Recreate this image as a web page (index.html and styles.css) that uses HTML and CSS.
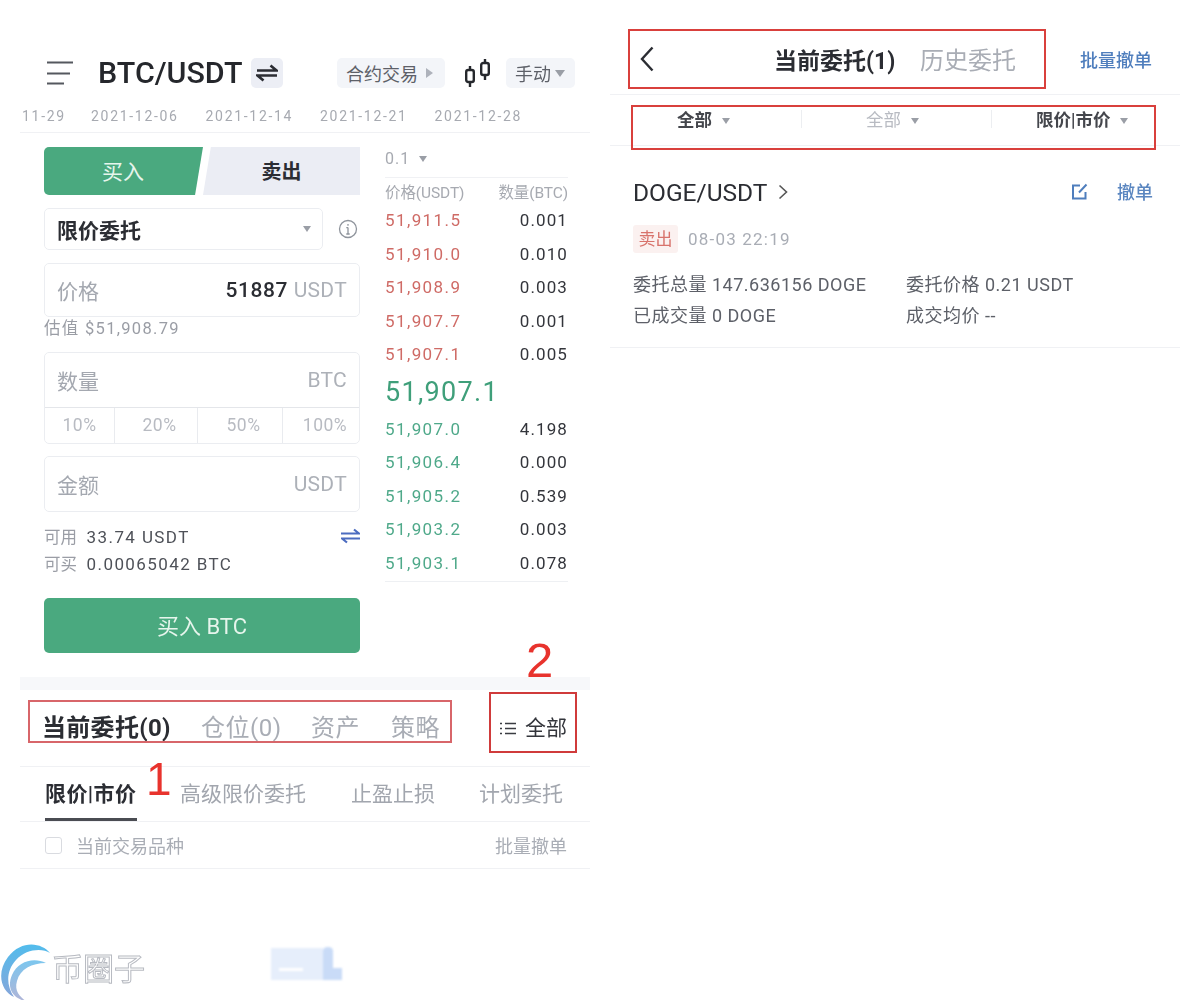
FILE: index.html
```html
<!DOCTYPE html>
<html lang="zh">
<head>
<meta charset="utf-8">
<title>BTC/USDT</title>
<link rel="stylesheet" href="styles.css">
</head>
<body>
<main class="page">
  <section class="phone phone-left">
    <header class="topbar">
      <svg class="menu-icon" width="26" height="24" viewBox="0 0 26 24"><path d="M0 1.5H26M0 12.5H23M0 22.5H17" stroke="#55585f" stroke-width="2.2" fill="none"/></svg>
      <h1 class="pair">BTC/USDT</h1>
      <span class="swap-btn"><svg width="22" height="18" viewBox="0 0 22 18"><path d="M1 6.5H20.5L14.5 1.5M21 11.5H1.5L7.5 16.5" stroke="#2b2d33" stroke-width="2.7" fill="none"/></svg></span>
      <span class="pill pill-contract">合约交易<i class="tri-right"></i></span>
      <svg class="candle-icon" width="28" height="30" viewBox="0 0 28 30"><path d="M6 8V29M21 1V22" stroke="#26282d" stroke-width="2.4"/><rect x="2.2" y="12" width="7.6" height="12" rx="2" fill="#fff" stroke="#26282d" stroke-width="2.4"/><rect x="17.2" y="5" width="7.6" height="12" rx="2" fill="#fff" stroke="#26282d" stroke-width="2.4"/></svg>
      <span class="pill pill-manual">手动<i class="tri-down"></i></span>
    </header>
    <div class="dates"><span class="d0">11-29</span><span>2021-12-06</span><span>2021-12-14</span><span>2021-12-21</span><span>2021-12-28</span></div>

    <div class="trade">
      <div class="form">
        <div class="side-tabs"><span class="buy">买入</span><span class="sell">卖出</span></div>
        <div class="order-type">
          <div class="select"><b>限价委托</b><i class="tri-down small"></i></div>
          <svg width="20" height="20" viewBox="0 0 20 20"><circle cx="10" cy="10" r="8.5" fill="none" stroke="#8f949c" stroke-width="1.3"/><path d="M10 8.5V15M10 5V6.8M8.3 8.7H10M8.3 15H11.7" stroke="#8f949c" stroke-width="1.3" fill="none"/></svg>
        </div>
        <div class="field price"><span class="label">价格</span><span class="value"><b>51887</b> USDT</span></div>
        <div class="hint">估值 $51,908.79</div>
        <div class="qty-box">
          <div class="field-inner"><span class="label">数量</span><span class="value">BTC</span></div>
          <div class="pcts"><span>10%</span><span>20%</span><span>50%</span><span>100%</span></div>
        </div>
        <div class="field amount"><span class="label">金额</span><span class="value">USDT</span></div>
        <div class="balance">
          <div class="bal-row"><span><em>可用</em> 33.74 USDT</span><svg width="19" height="16" viewBox="0 0 19 16"><path d="M0 5.5H18L13 1.5M19 10.5H1L6 14.5" stroke="#4c6cc0" stroke-width="2.2" fill="none"/></svg></div>
          <div class="bal-row"><span><em>可买</em> 0.00065042 BTC</span></div>
        </div>
        <div class="submit">买入 BTC</div>
      </div>

      <div class="book">
        <div class="step">0.1<i class="tri-down small"></i></div>
        <div class="book-head"><span>价格(USDT)</span><span>数量(BTC)</span></div>
        <div class="rows asks">
          <div class="row"><span>51,911.5</span><b>0.001</b></div>
          <div class="row"><span>51,910.0</span><b>0.010</b></div>
          <div class="row"><span>51,908.9</span><b>0.003</b></div>
          <div class="row"><span>51,907.7</span><b>0.001</b></div>
          <div class="row"><span>51,907.1</span><b>0.005</b></div>
        </div>
        <div class="mid">51,907.1</div>
        <div class="rows bids">
          <div class="row"><span>51,907.0</span><b>4.198</b></div>
          <div class="row"><span>51,906.4</span><b>0.000</b></div>
          <div class="row"><span>51,905.2</span><b>0.539</b></div>
          <div class="row"><span>51,903.2</span><b>0.003</b></div>
          <div class="row"><span>51,903.1</span><b>0.078</b></div>
        </div>
      </div>
    </div>

    <div class="strip"></div>
    <div class="main-tabs">
      <b>当前委托(0)</b><span class="t2">仓位(0)</span><span class="t3">资产</span><span class="t4">策略</span>
      <span class="all"><svg width="16" height="13" viewBox="0 0 16 13"><path d="M0 1.5H2M5 1.5H16M0 6.5H2M5 6.5H16M0 11.5H2M5 11.5H16" stroke="#3a3c42" stroke-width="1.6"/></svg>全部</span>
    </div>
    <div class="sub-tabs"><b>限价|市价</b><span>高级限价委托</span><span>止盈止损</span><span>计划委托</span></div>
    <div class="filter-row"><span class="check"><i></i>当前交易品种</span><span>批量撤单</span></div>
    <div class="brand">
      <svg class="brand-logo" width="52" height="58" viewBox="0 0 52 58"><defs><linearGradient id="g" x1="0" y1="0" x2="0" y2="1"><stop offset="0" stop-color="#52bcec"/><stop offset="1" stop-color="#86a6da"/></linearGradient><linearGradient id="h" x1="0" y1="0" x2="0" y2="1"><stop offset="0" stop-color="#7cc6ee"/><stop offset="1" stop-color="#b0b5d8"/></linearGradient></defs><path d="M50 10C42 0 22-4 8 14C-4 30 1 48 14 54C6 42 6 28 16 17C26 6 42 5 50 10Z" fill="url(#g)"/><path d="M46 20C34 14 18 18 12 32C6 46 14 56 26 58C20 54 14 48 17 38C20 26 32 20 46 20Z" fill="url(#h)"/></svg>
      <span class="brand-name">币圈子</span>
      <svg class="brand-shape" width="72" height="33" viewBox="0 0 72 33"><path d="M0 1H52V33H0Z" fill="#e6eefb"/><path d="M52 4Q52 0 57 0Q62 0 62 4V21H71V33H52Z" fill="#c9dbf7"/><rect x="8" y="21" width="24" height="3" fill="#fff"/></svg>
    </div>
    <div class="mark box1"></div>
    <div class="mark box2"></div>
    <span class="num num1">1</span>
    <span class="num num2">2</span>
  </section>

  <section class="phone phone-right">
    <header class="order-head">
      <svg class="back" width="14" height="26" viewBox="0 0 14 26"><path d="M12.5 1.5L2 13L12.5 24.5" stroke="#2b2d33" stroke-width="2.4" fill="none"/></svg>
      <b>当前委托(1)</b><span class="hist">历史委托</span><a class="bulk">批量撤单</a>
    </header>
    <div class="order-filter">
      <span class="f f1"><b>全部</b><i class="tri-down small"></i></span>
      <span class="f f2"><b>全部</b><i class="tri-down small"></i></span>
      <span class="f f3"><b>限价|市价</b><i class="tri-down small"></i></span>
    </div>
    <article class="order">
      <div class="order-top">
        <span class="symbol">DOGE/USDT<svg width="10" height="16" viewBox="0 0 10 16"><path d="M1.5 1.5L8.5 8L1.5 14.5" stroke="#555" stroke-width="1.6" fill="none"/></svg></span>
        <svg class="edit" width="17" height="17" viewBox="0 0 17 17"><path d="M9 2.5H2V15.5H14.5V9M8 9.5L15.5 1.5" stroke="#4f7ebd" stroke-width="2" fill="none"/></svg>
        <a class="cancel">撤单</a>
      </div>
      <div class="order-tag"><span class="tag">卖出</span><span class="time">08-03 22:19</span></div>
      <div class="order-grid">
        <span>委托总量 147.636156 DOGE</span><span>委托价格 0.21 USDT</span>
        <span>已成交量 0 DOGE</span><span>成交均价 --</span>
      </div>
    </article>
    <div class="mark box3"></div>
    <div class="mark box4"></div>
  </section>
</main>
</body>
</html>
```
FILE: styles.css
```css
* { box-sizing: border-box; }
html, body { margin: 0; background: #fff; }
body {
  height: 1000px;
  overflow: hidden;
  font-family: Roboto, "Noto Sans CJK SC", sans-serif;
  color: #2b2d33;
}
b { font-weight: 500; }
i, em { font-style: normal; }
.page { display: flex; gap: 20px; padding-left: 20px; height: 1000px; filter: blur(0.6px); }
.phone { position: relative; width: 570px; height: 1000px; flex: none; }

.tri-right { display: inline-block; border-left: 7px solid #aeb2bb; border-top: 5px solid transparent; border-bottom: 5px solid transparent; margin-left: 8px; }
.tri-down { display: inline-block; border-top: 7px solid #9a9ea6; border-left: 5px solid transparent; border-right: 5px solid transparent; margin-left: 4px; }
.tri-down.small { border-top-width: 6px; border-left-width: 4px; border-right-width: 4px; }

/* left phone header */
.topbar { display: flex; align-items: center; height: 34px; margin-top: 56px; padding-left: 27px; }
.menu-icon { flex: none; }
.pair { margin: 0 0 0 25px; font-size: 30.4px; font-weight: 500; line-height: 34px; width: 153px; color: #25272c; white-space: nowrap; }
.swap-btn { display: flex; align-items: center; justify-content: center; width: 32px; height: 30px; background: #eceef5; border-radius: 5px; }
.pill { display: flex; align-items: center; height: 30px; background: #f3f5f9; border-radius: 5px; font-size: 18px; color: #5d6068; white-space: nowrap; }
.pill-contract { margin-left: 54px; width: 108px; padding-left: 9px; }
.candle-icon { margin-left: 19px; flex: none; }
.pill-manual { margin-left: 14px; width: 69px; padding-left: 9px; }
.dates { display: flex; gap: 26px; height: 43px; padding: 14px 0 0 2px; border-bottom: 1px solid #f0f1f4; font-size: 14px; letter-spacing: 1.7px; line-height: 24px; color: #a7aab1; white-space: nowrap; }
.dates span { width: 88.5px; }
.dates .d0 { width: 43px; }

/* trade area */
.trade { display: flex; padding: 14px 0 0 24px; gap: 25px; height: 545px; }
.form { width: 316px; flex: none; }
.side-tabs { display: flex; height: 48px; line-height: 51px; text-align: center; }
.buy { width: 159px; font-size: 21px; color: #e6f5ec; background: #4aa97f; border-radius: 5px 0 0 5px; clip-path: polygon(0 0, 100% 0, 95% 100%, 0 100%); padding-right: 1px; }
.sell { width: 157px; font-size: 20px; background: #ebedf4; font-weight: 700; color: #2b2d33; clip-path: polygon(5% 0, 100% 0, 100% 100%, 0 100%); }
.order-type { display: flex; align-items: center; justify-content: space-between; margin-top: 13px; padding-right: 2px; }
.select { display: flex; align-items: center; justify-content: space-between; width: 279px; height: 42px; border: 1px solid #ebedf1; border-radius: 5px; padding: 0 11px 0 12px; font-size: 21px; color: #2b2d33; }
.select b { font-weight: 700; }
.field, .field-inner { display: flex; align-items: center; justify-content: space-between; padding: 0 12px; }
.field { height: 54px; border: 1px solid #ebedf1; border-radius: 5px; }
.label { font-size: 21px; color: #a4a8b0; }
.value { font-size: 21px; letter-spacing: .3px; color: #adb1b8; white-space: nowrap; }
.value b { color: #2b2d33; letter-spacing: .6px; }
.price { margin-top: 13px; }
.hint { height: 35px; padding-top: 1px; font-size: 16.5px; line-height: 22px; color: #9a9da5; letter-spacing: 1.3px; }
.qty-box { height: 92px; border: 1px solid #ebedf1; border-radius: 5px; }
.field-inner { height: 55px; border-bottom: 1px solid #e4e6ea; }
.pcts { display: grid; grid-template-columns: 69px 83px 85px 1fr; height: 35px; font-size: 17.5px; line-height: 34px; color: #b8bbc2; text-align: center; letter-spacing: .5px; }
.pcts span + span { border-left: 1px solid #e9ebef; padding-left: 7px; }
.pcts span:last-child { padding-left: 8px; }
.amount { margin-top: 12px; height: 56px; }
.balance { margin-top: 10px; font-size: 17px; color: #4e5158; letter-spacing: 1.4px; white-space: nowrap; }
.balance em { color: #9a9da5; letter-spacing: 0; margin-right: 4px; font-size: 16.5px; }
.bal-row { display: flex; justify-content: space-between; align-items: center; height: 27.5px; }
.submit { margin-top: 21px; height: 55px; background: #4aa97f; border-radius: 5px; color: #e6f5ec; font-size: 22px; line-height: 58px; text-align: center; }

/* order book */
.book { width: 183px; flex: none; }
.step { height: 31px; border-bottom: 1px solid #f0f1f4; font-size: 16px; line-height: 24px; letter-spacing: 1px; color: #a7aab1; }
.step .tri-down { margin-left: 9px; vertical-align: 2px; }
.book-head { display: flex; justify-content: space-between; height: 25px; font-size: 15.5px; line-height: 30px; color: #a7aab1; white-space: nowrap; letter-spacing: -.1px; }
.rows { font-size: 17px; }
.row { display: flex; justify-content: space-between; height: 33.5px; line-height: 35px; letter-spacing: 1.4px; }
.row b { font-weight: 400; color: #33353b; letter-spacing: 1.1px; }
.asks span { color: #cf6b66; }
.bids span { color: #4fa98a; }
.mid { height: 43px; margin-top: -2px; font-size: 27px; line-height: 46px; letter-spacing: 1.3px; color: #3f9f7a; }
.bids { height: 170px; margin-top: 0; border-bottom: 1px solid #eef0f3; }

/* bottom tabs */
.strip { height: 13px; margin-top: -1px; background: #f7f8fa; }
.main-tabs { display: flex; align-items: baseline; height: 77px; padding: 22px 0 0 22px; border-bottom: 1px solid #f0f1f4; font-size: 24px; line-height: 32px; letter-spacing: .5px; color: #a9adb5; white-space: nowrap; }
.main-tabs b { color: #2b2d33; width: 159px; font-weight: 700; letter-spacing: .3px; }
.main-tabs .t2 { width: 110px; }
.main-tabs .t3 { width: 80px; }
.main-tabs .t4 { width: 94px; }
.all { display: flex; align-self: flex-start; align-items: center; gap: 9px; margin-left: 15px; font-size: 21px; letter-spacing: 0; color: #33353b; }
.sub-tabs { display: flex; height: 55px; padding-left: 25px; border-bottom: 1px solid #f0f1f4; font-size: 21px; line-height: 54px; color: #a2a6ae; white-space: nowrap; }
.sub-tabs b { color: #2b2d33; width: 92px; height: 54px; border-bottom: 3px solid #4a4c52; margin-right: 43px; font-weight: 700; letter-spacing: .4px; }
.sub-tabs span:nth-child(2) { width: 171px; }
.sub-tabs span:nth-child(3) { width: 128px; }
.filter-row { display: flex; justify-content: space-between; align-items: center; height: 47px; padding: 0 23px 0 25px; border-bottom: 1px solid #f0f1f4; font-size: 18px; color: #a9adb5; }
.check { display: flex; align-items: center; gap: 14px; }
.check i { width: 17px; height: 17px; border: 1.5px solid #d9dbe0; border-radius: 3px; }
.brand { display: flex; margin: 74px 0 0 -20px; position: relative; height: 58px; }
.brand-logo { flex: none; }
.brand-name { font-size: 31px; line-height: 58px; height: 58px; margin-top: -2px; color: #fff; -webkit-text-stroke: 1px #b8bbc2; white-space: nowrap; }
.brand-shape { margin: 4px 0 0 126px; flex: none; filter: blur(1.2px); }

/* annotations */
.mark { position: absolute; border: 2px solid #d9403c; pointer-events: none; }
.box1 { left: 8px; top: 700px; width: 424px; height: 43px; border-color: #d8666a; }
.box2 { left: 469px; top: 692px; width: 88px; height: 61px; border-color: #d03b3b; }
.box3 { left: 18px; top: 29px; width: 418px; height: 60px; }
.box4 { left: 21px; top: 105px; width: 525px; height: 45px; }
.num { position: absolute; color: #e8332d; font-family: "Liberation Sans", sans-serif; }
.num1 { left: 126px; top: 756px; font-size: 46px; line-height: 46px; }
.num2 { left: 506px; top: 636px; font-size: 49px; line-height: 49px; }

/* right phone */
.order-head { display: flex; align-items: center; height: 95px; padding: 23px 0 0 30px; border-bottom: 1px solid #f0f1f4; white-space: nowrap; }
.order-head b { margin-left: 120px; font-size: 23px; font-weight: 700; color: #2b2d33; width: 146px; }
.back { flex: none; }
.hist { font-size: 24px; color: #a9adb5; width: 160px; }
.bulk { font-size: 18px; font-weight: 500; color: #4f7ebd; }
.order-filter { display: grid; grid-template-columns: 191px 190px 1fr; height: 51px; border-bottom: 1px solid #f0f1f4; font-size: 17.5px; line-height: 50px; }
.f { position: relative; text-align: left; color: #44464c; }
.f b { font-weight: 700; }
.f .tri-down { vertical-align: middle; margin-left: 10px; }
.f1 { padding-left: 67px; }
.f2 { padding-left: 65px; color: #b8bbc2; }
.f2 b { font-weight: 400; }
.f3 { padding-left: 45px; }
.f2::before, .f3::before { content: ""; position: absolute; left: 0; top: 15px; height: 18px; border-left: 1px solid #eceef1; }
.order { height: 202px; border-bottom: 1px solid #f0f1f4; padding: 26px 27px 0 23px; }
.order-top { display: flex; align-items: center; height: 40px; }
.symbol { display: flex; align-items: center; gap: 11px; font-size: 24.5px; color: #2b2d33; flex: 1; }
.edit { margin-right: 29px; margin-bottom: 1px; }
.cancel { font-size: 18px; font-weight: 500; color: #5a86c0; margin-bottom: 2px; }
.order-tag { display: flex; align-items: center; gap: 10px; margin-top: 13px; }
.tag { width: 45px; height: 28px; background: #fbf1f0; border-radius: 3px; font-size: 17px; line-height: 28px; text-align: center; color: #d8736c; }
.time { font-size: 17px; letter-spacing: 1.2px; color: #a9adb5; }
.order-grid { display: grid; grid-template-columns: 273px 1fr; margin-top: 16px; font-size: 18px; letter-spacing: .5px; line-height: 31px; color: #5d6068; }
```
